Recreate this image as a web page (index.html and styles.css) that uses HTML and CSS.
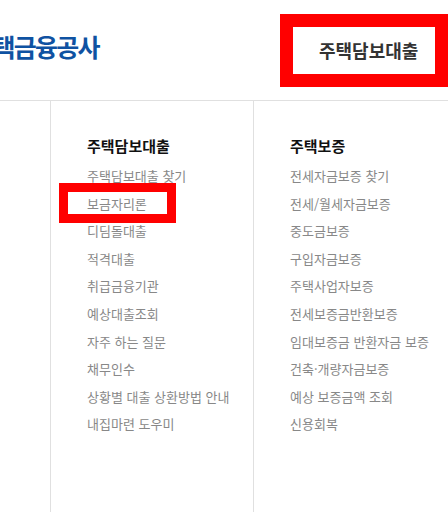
FILE: index.html
```html
<!DOCTYPE html>
<html lang="ko">
<head>
    <meta charset="UTF-8">
    <meta name="viewport" content="width=device-width, initial-scale=1.0">
    <title>주택담보대출</title>
    <link rel="stylesheet" href="styles.css">
</head>
<body>
    <header class="header">
        <div class="logo">한국주택금융공사</div>
        <nav class="gnb">
            <a class="gnb-item marked" href="#">주택담보대출</a>
        </nav>
    </header>

    <div class="menu">
        <div class="menu-col">
            <h3>주택담보대출</h3>
            <ul>
                <li>주택담보대출 찾기</li>
                <li class="hl">보금자리론</li>
                <li>디딤돌대출</li>
                <li>적격대출</li>
                <li>취급금융기관</li>
                <li>예상대출조회</li>
                <li>자주 하는 질문</li>
                <li>채무인수</li>
                <li>상황별 대출 상환방법 안내</li>
                <li>내집마련 도우미</li>
            </ul>
        </div>
        <div class="menu-col">
            <h3>주택보증</h3>
            <ul>
                <li>전세자금보증 찾기</li>
                <li>전세/월세자금보증</li>
                <li>중도금보증</li>
                <li>구입자금보증</li>
                <li>주택사업자보증</li>
                <li>전세보증금반환보증</li>
                <li>임대보증금 반환자금 보증</li>
                <li>건축·개량자금보증</li>
                <li>예상 보증금액 조회</li>
                <li>신용회복</li>
            </ul>
        </div>
    </div>
</body>
</html>
```

FILE: styles.css
```css
body {
    margin: 0;
    font-family: "Noto Sans CJK KR", "Noto Sans", sans-serif;
    background-color: #fff;
    overflow: hidden;
}
.header {
    display: flex;
    align-items: center;
    height: 100px;
    border-bottom: 1px solid #e0e0e0;
}
.logo {
    margin-left: -71px;
    margin-bottom: 8px;
    font-size: 25px;
    font-weight: bold;
    color: #0f52a2;
    letter-spacing: -1.8px;
    white-space: nowrap;
}
.gnb {
    margin-left: auto;
}
.gnb-item {
    display: block;
    text-decoration: none;
    color: #333;
    font-size: 18px;
    font-weight: bold;
    line-height: 47px;
    width: 116px;
    padding-left: 26px;
}
.marked {
    border: 13px solid #ff0000;
}
.menu {
    display: grid;
    grid-template-columns: 203px 203px;
    margin-left: 50px;
    height: 411px;
}
.menu-col {
    border-left: 1px solid #e0e0e0;
    padding-left: 36px;
}
.menu-col:last-child {
    border-right: 1px solid #e0e0e0;
}
h3 {
    margin: 35px 0 6px;
    font-size: 15px;
    line-height: 20px;
    color: #111;
}
ul {
    list-style: none;
    margin: 0;
    padding: 0;
}
li {
    font-size: 13px;
    line-height: 27.6px;
    color: #888;
    white-space: nowrap;
}
.hl {
    position: relative;
}
.hl::after {
    content: "";
    position: absolute;
    left: -28px;
    top: -7px;
    width: 99px;
    height: 22px;
    border: 9px solid #ff0000;
}
```
